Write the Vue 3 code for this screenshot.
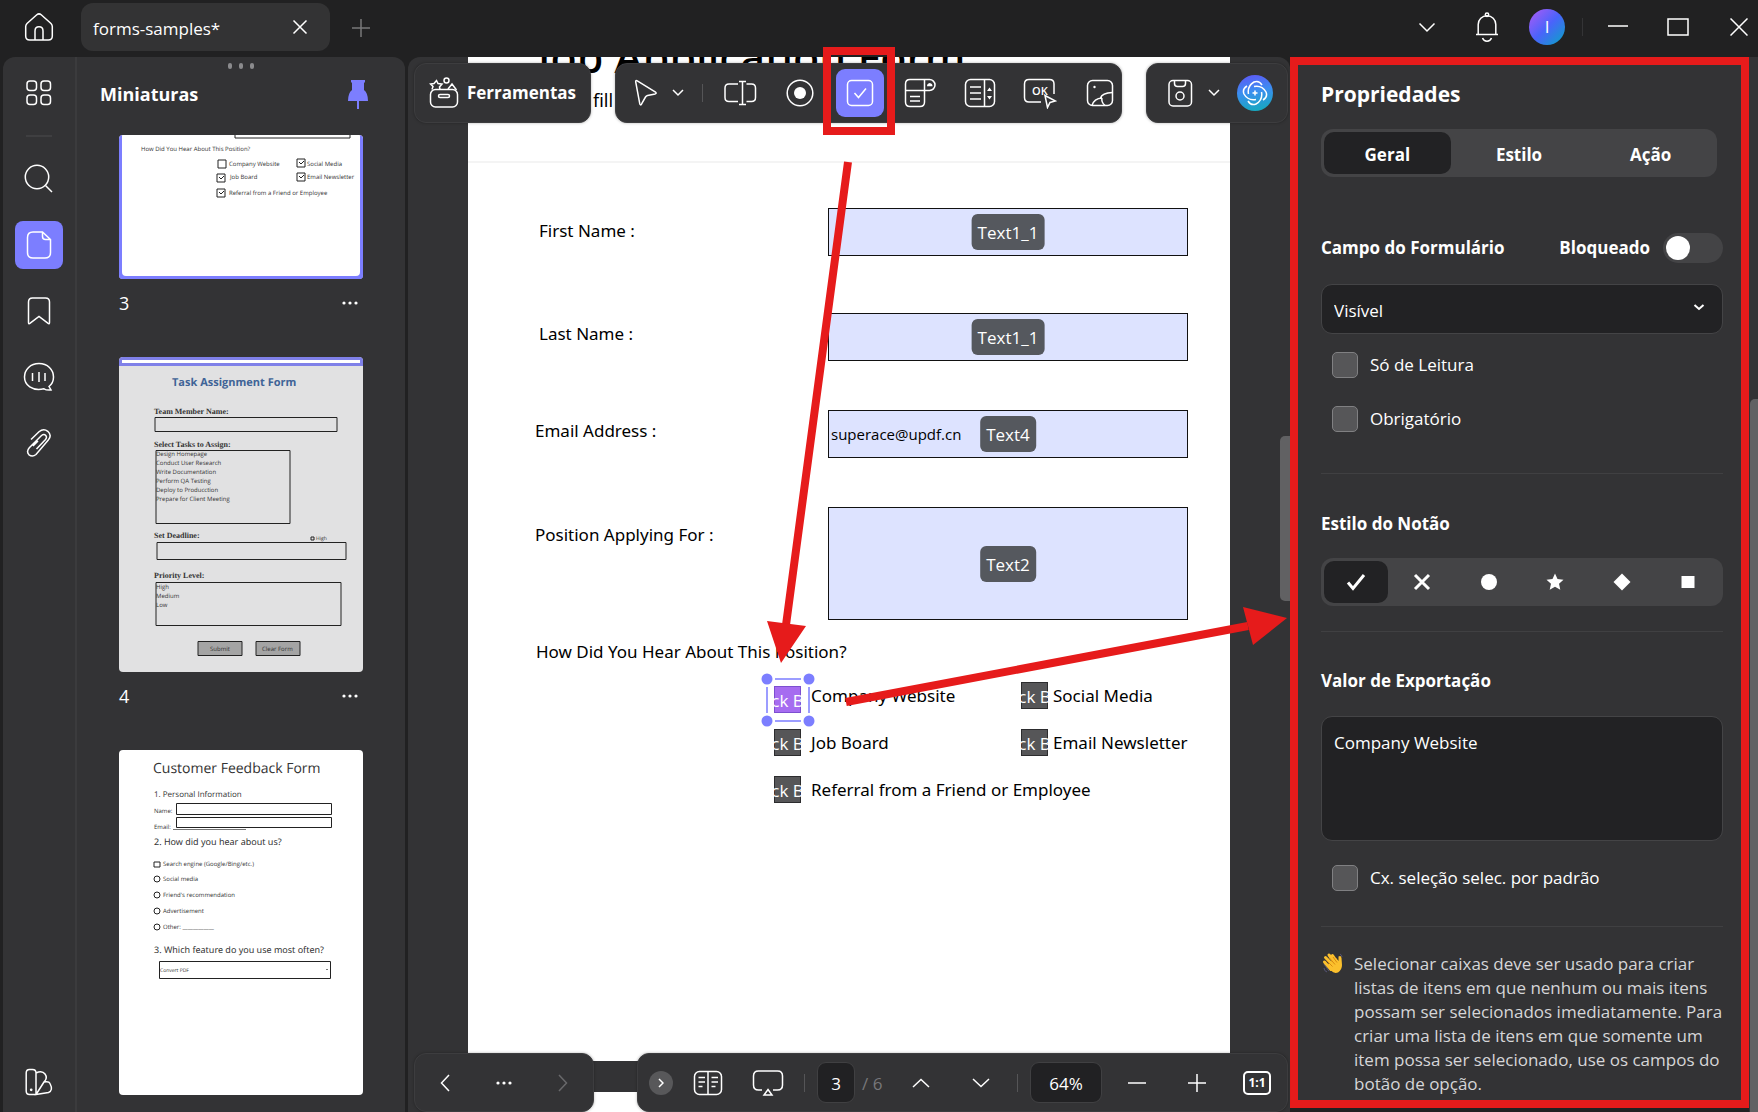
<script setup>
import { ref } from 'vue'

const tabs = ['Geral', 'Estilo', 'Ação']
const activeTab = ref('Geral')
const marks = ['check', 'cross', 'circle', 'star', 'diamond', 'square']
const activeMark = ref('check')
const visibility = ref('Visível')
const exportValue = ref('Company Website')
const email = ref('superace@updf.cn')
const zoom = ref('64%')
const pageNumber = ref('3')

const fields = [
  { id: 'first', label: 'First Name :', tag: 'Text1_1', kind: 'indent first' },
  { id: 'last', label: 'Last Name :', tag: 'Text1_1', kind: 'indent second' },
]
const choices = [
  { id: 'company', label: 'Company Website', selected: true },
  { id: 'social', label: 'Social Media', ticked: true },
  { id: 'job', label: 'Job Board', ticked: true },
  { id: 'news', label: 'Email Newsletter', ticked: true },
  { id: 'referral', label: 'Referral from a Friend or Employee', ticked: true, wide: true },
]
const tasks = [
  'Design Homepage',
  'Conduct User Research',
  'Write Documentation',
  'Perform QA Testing',
  'Deploy to Producction',
  'Prepare for Client Meeting',
]
const sources = ['Social media', "Friend's recommendation", 'Advertisement', 'Other: ____________']
</script>

<template>
  <div class="app">
    <header class="titlebar">
      <button class="home" aria-label="Home">
        <svg width="30" height="30" viewBox="0 0 30 30"><path d="M3 11.5 12.8 2.8q2.2-1.9 4.4 0L27 11.5q1.3 1.3 1.3 3V24q0 4-4 4H5.700q-4 0-4-4v-9.500q0-1.700 1.300-3zM11 28v-9q0-4.200 4-4.200t4 4.200v9" /></svg>
      </button>
      <div class="tab">
        <span>forms-samples*</span>
        <button aria-label="Close tab"><svg width="16" height="16" viewBox="0 0 16 16"><path d="M1.500 1.500l13 13m0-13l-13 13" /></svg></button>
      </div>
      <button class="newtab" aria-label="New tab"><svg width="18" height="18" viewBox="0 0 18 18"><path d="M9 0v18M0 9h18" /></svg></button>
      <div class="window">
        <button aria-label="More"><svg width="18" height="18" viewBox="0 0 18 18"><path d="M1.500 5.500 9 13l7.500-7.500" /></svg></button>
        <button aria-label="Notifications">
          <svg width="24" height="30" viewBox="0 0 24 30"><path d="M1 22.500h22M3.200 22.500V12.500a8.800 8.800 0 0 1 17.600 0v10M7.500 26a4.800 4.800 0 0 0 9 0" /><circle cx="12" cy="2.800" r="1.700" /></svg>
        </button>
        <button aria-label="Account"><span class="avatar">I</span></button>
        <i></i>
        <button aria-label="Minimize"><svg width="22" height="20" viewBox="0 0 22 20"><path d="M1 9h20" /></svg></button>
        <button aria-label="Maximize"><svg width="22" height="20" viewBox="0 0 22 20"><path d="M1 2h20v16H1z" /></svg></button>
        <button class="last" aria-label="Close"><svg width="18" height="18" viewBox="0 0 18 18"><path d="M.5.5l17 17m0-17l-17 17" /></svg></button>
      </div>
    </header>

    <main class="body">
      <section class="left">
        <nav class="rail">
          <button aria-label="Overview">
            <svg width="26" height="26" viewBox="0 0 26 26"><rect x="1" y="1" width="9.500" height="9.500" rx="3" /><rect x="15" y="1" width="9.500" height="9.500" rx="3" /><rect x="1" y="15" width="9.500" height="9.500" rx="3" /><rect x="15" y="15" width="9.500" height="9.500" rx="3" /></svg>
          </button>
          <hr />
          <button aria-label="Search"><svg width="30" height="30" viewBox="0 0 30 30"><circle cx="13" cy="13" r="11.700" /><path d="M21.500 21.500l6.500 6.500" /></svg></button>
          <button class="on" aria-label="Thumbnails">
            <svg width="26" height="30" viewBox="0 0 26 30"><path d="M16.500 2H7Q1.500 2 1.500 7.500v15Q1.500 28 7 28h12q5.500 0 5.500-5.500V9.500zM16.500 2v4.500q0 3 3 3h5" /></svg>
          </button>
          <button aria-label="Bookmarks"><svg width="24" height="30" viewBox="0 0 24 30"><path d="M1.500 6Q1.500 2 5.500 2h13q4 0 4 4v20.500q0 2.200-1.700.7L12 20.500l-8.800 6.700q-1.700 1.500-1.700-.7z" /></svg></button>
          <button aria-label="Comments">
            <svg width="32" height="30" viewBox="0 0 32 30"><path d="M26 24.500l2 3.500q-4.500.5-7-1.200C9 29.500 1.500 23 1.500 15 1.500 7.500 7.500 1.500 16 1.500S30.500 7.500 30.500 15q0 6-4.500 9.500zM9.500 11v8M16 10v10M22 11v8" /></svg>
          </button>
          <button aria-label="Attachments">
            <svg width="26" height="30" viewBox="0 0 26 30"><path d="M5 11.500l8-7.700q4.500-4 8.800-.5 4.500 4.200.5 8.700L10 26.500q-3.500 3-7 .3-3-3.300.3-7L15.500 7.500q2.500-1.800 4.300 0 1.500 2-.3 4L10.500 21M7 18l5-5" /></svg>
          </button>
          <button class="bottom" aria-label="Theme">
            <svg width="28" height="28" viewBox="0 0 28 28"><path d="M4.500 1.500h3q3.500 0 3.500 3.500V26.500H4.500q-3.300 0-3.300-3.500V5q0-3.500 3.300-3.500zM11 5q6-3 9 1t-1 8l-8 12.500M19 14q5-1 6 1.500 3.500 7-1.500 9l-12.500 2L19 14" /><circle cx="6.200" cy="21.800" r=".6" /></svg>
          </button>
        </nav>
        <div class="thumbs">
          <div class="grip"><i></i><i></i><i></i></div>
          <header>
            <h2>Miniaturas</h2>
            <button aria-label="Pin panel"><svg width="22" height="30" viewBox="0 0 22 30"><path class="solid" d="M4 0h14v2l-1 1v7q4 3 4 11h-9v8h-2v-8H1q0-8 4-11V3L4 2z" /></svg></button>
          </header>
          <div class="list">
            <figure>
              <svg class="thumb current" viewBox="0 0 244 144" role="img" aria-label="Page 3">
                <path class="ink" d="M116 0v3h115V0" />
                <g class="tiny">
                  <text x="22" y="16">How Did You Hear About This Position?</text>
                  <text x="110" y="31">Company Website</text><text x="188" y="31">Social Media</text>
                  <text x="111" y="44">Job Board</text><text x="188" y="44">Email Newsletter</text>
                  <text x="110" y="60">Referral from a Friend or Employee</text>
                </g>
                <path class="ink" d="M99 25h8v8h-8zM98 39h8v8h-8zM98 54h8v8h-8zM178 24h8v8h-8zM178 38h8v8h-8zM100 42l2 2 3-3M100 57l2 2 3-3M180 27l2 2 3-3M180 41l2 2 3-3" />
              </svg>
              <figcaption>3<button aria-label="Page 3 options"><svg width="16" height="4" viewBox="0 0 16 4"><g class="solid"><circle cx="2" cy="2" r="1.600" /><circle cx="8" cy="2" r="1.600" /><circle cx="14" cy="2" r="1.600" /></g></svg></button></figcaption>
            </figure>
            <figure>
              <svg class="thumb grey" viewBox="0 0 244 315" role="img" aria-label="Page 4">
                <path d="M0 0h244v9H0z" fill="#7f80e8" /><path d="M3 3h238v3H3z" fill="#fff" />
                <text class="task" x="53" y="29">Task Assignment Form</text>
                <g class="serif">
                  <text x="35" y="57">Team Member Name:</text><text x="35" y="90">Select Tasks to Assign:</text>
                  <text x="35" y="181">Set Deadline:</text><text x="35" y="221">Priority Level:</text>
                </g>
                <path class="ink" d="M36 60.500h182v14H36zM37 93.500h134v73H37zM38 185.500h189v17H38zM37 225.500h185v43H37zM192 180h3v3h-3z" />
                <g class="tiny">
                  <text v-for="(t, i) in tasks" :key="t" x="37" :y="99 + i * 9">{{ t }}</text>
                  <text v-for="(t, i) in ['High', 'Medium', 'Low']" :key="t" x="37" :y="232 + i * 9">{{ t }}</text>
                </g>
                <text class="micro" x="197" y="183">High</text>
                <path class="ink filled" d="M79 284.500h44v14H79zM137 284.500h44v14h-44z" />
                <g class="tiny"><text x="91" y="294">Submit</text><text x="143" y="294">Clear Form</text></g>
              </svg>
              <figcaption>4<button aria-label="Page 4 options"><svg width="16" height="4" viewBox="0 0 16 4"><g class="solid"><circle cx="2" cy="2" r="1.600" /><circle cx="8" cy="2" r="1.600" /><circle cx="14" cy="2" r="1.600" /></g></svg></button></figcaption>
            </figure>
            <figure>
              <svg class="thumb" viewBox="0 0 244 345" role="img" aria-label="Page 5">
                <text class="big" x="34" y="23">Customer Feedback Form</text>
                <text class="mid" x="35" y="47">1. Personal Information</text>
                <g class="tiny"><text x="35" y="63">Name:</text><text x="35" y="79">Email:</text></g>
                <path class="ink" d="M57.500 53.500h155v11h-155zM57.500 67.500h155v10h-155z" /><path class="hair" d="M54 79.500h73" />
                <text class="sub" x="35" y="95">2. How did you hear about us?</text>
                <text class="tiny" x="44" y="116">Search engine (Google/Bing/etc.)</text>
                <path class="ink" d="M35 112h6v5h-6z" />
                <g v-for="(t, i) in sources" :key="t">
                  <circle class="ink" cx="38" :cy="129 + i * 16" r="3" />
                  <text class="tiny" x="44" :y="131 + i * 16">{{ t }}</text>
                </g>
                <text class="sub" x="35" y="203">3. Which feature do you use most often?</text>
                <path class="ink" d="M40.500 211.500h171v17h-171z" />
                <text class="micro" x="41" y="222">Convert PDF</text><path class="hair" d="M207 219l1 1 1-1" />
              </svg>
            </figure>
          </div>
        </div>
      </section>

      <section class="center">
        <div class="viewport">
          <article class="sheet">
            <div class="heading">
              <h1>Job Application Form</h1>
              <p>fill</p>
            </div>
            <form @submit.prevent>
              <div v-for="f in fields" :key="f.id" class="row" :class="f.kind">
                <label :for="f.id">{{ f.label }}</label>
                <div class="field"><input :id="f.id" type="text" /><span>{{ f.tag }}</span></div>
              </div>
              <div class="row">
                <label for="email">Email Address :</label>
                <div class="field"><input id="email" v-model="email" type="text" /><span>Text4</span></div>
              </div>
              <div class="row tall">
                <label for="position">Position Applying For :</label>
                <div class="field"><textarea id="position"></textarea><span>Text2</span></div>
              </div>
              <fieldset>
                <legend>How Did You Hear About This Position?</legend>
                <div class="choices">
                  <label v-for="c in choices" :key="c.id" :class="{ wide: c.wide, selected: c.selected }">
                    <span class="box">
                      <input type="checkbox" :checked="c.ticked" />
                      <b>ck B</b>
                      <svg v-if="c.selected" class="handles" width="54" height="54" viewBox="0 0 54 54">
                        <path d="M14 6h26M14 48h26M6 14v26M48 14v26" />
                        <circle cx="6" cy="6" r="5.500" /><circle cx="48" cy="6" r="5.500" /><circle cx="6" cy="48" r="5.500" /><circle cx="48" cy="48" r="5.500" />
                      </svg>
                    </span>
                    {{ c.label }}
                  </label>
                </div>
              </fieldset>
            </form>
          </article>
          <article class="next"></article>
          <div class="scroll"></div>
        </div>

        <div class="bar top">
          <button class="box-bar tools">
            <svg width="30" height="32" viewBox="0 0 30 32"><rect x="1.500" y="12.500" width="27" height="17.500" rx="5" /><rect x="9.500" y="17.500" width="11" height="3" rx="1.500" /><path d="M3 12.500l1-3-2.500-2.500 3.500-.5 2.500-3 1.500 3 4 .5-2.500 3 .5 2.500M19 12l4-5 4.500 6" /><circle cx="17.500" cy="3.500" r="2.500" /></svg>
            Ferramentas
          </button>
          <div class="box-bar kit">
            <button class="pick" aria-label="Select"><svg width="24" height="28" viewBox="0 0 24 28"><path d="M1.700 2.800q-.2-2 1.600-1L21.500 13q1.500 1.300-.3 1.900l-7.700 1.600q-1.300.3-2 1.500l-4 7.200q-1.200 1.500-1.700-.3z" /></svg></button>
            <button class="drop" aria-label="Select options"><svg width="12" height="8" viewBox="0 0 12 8"><path d="M1 1l5 5 5-5" /></svg></button>
            <i></i>
            <div class="seven">
              <button aria-label="Text field"><svg width="34" height="26" viewBox="0 0 34 26"><path d="M15 4H6Q2 4 2 8v9.500q0 4 4 4h9M23.500 4h5q4 0 4 4v9.500q0 4-4 4h-5M19.500 1.500v23M16 1.500h7M16 24.500h7" /></svg></button>
              <button aria-label="Radio button"><svg width="28" height="28" viewBox="0 0 28 28"><circle cx="14" cy="14" r="12.800" /><circle class="solid" cx="14" cy="14" r="6" /></svg></button>
              <button class="on" aria-label="Check box"><svg width="28" height="28" viewBox="0 0 28 28"><rect x="1.500" y="1.500" width="25" height="25" rx="4" /><path d="M8.500 14l4 4.500 7.500-9" /></svg></button>
              <button aria-label="Dropdown"><svg width="32" height="30" viewBox="0 0 32 30"><path d="M20.500 12.500V24q0 4.500-4.500 4.500H6Q1.500 28.500 1.500 24V6Q1.500 1.500 6 1.500h19.500a5.500 5.500 0 0 1 0 11zM20.500 1.500v11M1.500 12.500h19M6 18.500h10M6 23h10" /><path class="solid" d="M23 8.200q0-2.700 2.700-3.200 2.800.5 2.800 3.200z" /></svg></button>
              <button aria-label="List box"><svg width="32" height="30" viewBox="0 0 32 30"><rect x="1.500" y="1.500" width="29" height="27" rx="5" /><path d="M20.500 1.500v27M6 9h11M6 15h11M6 21h11" /><path class="solid" d="M23 13l2.500-3.500L28 13zM23 18l2.500 3.500L28 18z" /></svg></button>
              <button aria-label="Button">
                <svg width="34" height="32" viewBox="0 0 34 32"><path d="M18 25H6Q1.500 25 1.500 20.500V7Q1.500 2.500 6 2.500h20.500Q31 2.500 31 7v10" /><path d="M22 18.500l2.500 12 2.500-5 5.500-1.500z" /><text x="9" y="18">OK</text></svg>
              </button>
              <button aria-label="Image"><svg width="28" height="28" viewBox="0 0 28 28"><rect x="1.500" y="1.500" width="25" height="25" rx="5" /><path d="M6 26.500q2-7 10-7.500M10.500 26.500M14.500 19q1.500-5 12-5.500M16 19q-1 4 3 7.500" /><circle class="solid" cx="8.500" cy="8" r="1.200" /></svg></button>
            </div>
          </div>
          <div class="box-bar extra">
            <button aria-label="Save"><svg width="26" height="28" viewBox="0 0 26 28"><rect x="2" y="1.500" width="22.500" height="25.500" rx="4" /><path d="M7.500 1.500v3q0 3 3 3h5q3 0 3-3v-3" /><circle cx="13" cy="17" r="4" /></svg></button>
            <button class="drop" aria-label="Save options"><svg width="12" height="8" viewBox="0 0 12 8"><path d="M1 1l5 5 5-5" /></svg></button>
            <button class="ai" aria-label="AI assistant">
              <svg width="26" height="26" viewBox="0 0 26 26"><path d="M6.500 14Q5 6 12 2q5-2 8 3M12 6.500q8-1.500 12 5.500 2 5-3 8M19.500 12q1.500 8-5.500 12-5 2-8-3M14 19.500Q6 21 2 14 0 9 5 6M13 10.500v5M10.500 13h5" /></svg>
            </button>
          </div>
        </div>

        <div class="bar foot">
          <div class="box-bar history">
            <button aria-label="Back"><svg width="10" height="18" viewBox="0 0 10 18"><path d="M9 1L1.500 9 9 17" /></svg></button>
            <button aria-label="More"><svg width="16" height="4" viewBox="0 0 16 4"><g class="solid"><circle cx="2" cy="2" r="1.600" /><circle cx="8" cy="2" r="1.600" /><circle cx="14" cy="2" r="1.600" /></g></svg></button>
            <button class="dim" aria-label="Forward"><svg width="10" height="18" viewBox="0 0 10 18"><path d="M1 1l7.500 8L1 17" /></svg></button>
          </div>
          <div class="box-bar pager">
            <button class="round" aria-label="Collapse"><svg width="6" height="10" viewBox="0 0 6 10"><path d="M1 1l4 4-4 4" /></svg></button>
            <button class="book" aria-label="Page layout"><svg width="30" height="26" viewBox="0 0 30 26"><rect x="1.500" y="1.500" width="27" height="23" rx="5" /><path d="M15 1.500v23M5.500 7.500H12M5.500 12H12M5.500 16.500h4M18.500 7.500H25M18.500 12H25M18.500 16.500h4" /></svg></button>
            <button aria-label="Presentation"><svg width="32" height="28" viewBox="0 0 32 28"><path d="M10 21H6.500Q1.500 21 1.500 16V7Q1.500 2 6.500 2h19q5 0 5 5v9q0 5-5 5H21M16 20.500l4 5.500h-8z" /></svg></button>
            <i></i>
            <input v-model="pageNumber" class="pill page" aria-label="Page" />
            <span class="total">/ 6</span>
            <button aria-label="Previous page"><svg width="18" height="10" viewBox="0 0 18 10"><path d="M1 9l8-7.500L17 9" /></svg></button>
            <button aria-label="Next page"><svg width="18" height="10" viewBox="0 0 18 10"><path d="M1 1l8 7.500L17 1" /></svg></button>
            <i></i>
            <input v-model="zoom" class="pill zoom" aria-label="Zoom" />
            <button aria-label="Zoom out"><svg width="18" height="18" viewBox="0 0 18 18"><path d="M0 9h18" /></svg></button>
            <button aria-label="Zoom in"><svg width="18" height="18" viewBox="0 0 18 18"><path d="M9 0v18M0 9h18" /></svg></button>
            <button aria-label="Actual size"><span class="ratio">1:1</span></button>
          </div>
        </div>

        <svg class="arrows" width="882" height="700" viewBox="0 0 882 700">
          <path class="stem" d="M440 105L378 568M438 645L840 569" />
          <path class="tip" d="M359 564l39 5-25 37zM835 550l44 11-34 27z" />
        </svg>
      </section>

      <aside class="props">
        <h2>Propriedades</h2>
        <div class="segment tabs">
          <button v-for="t in tabs" :key="t" :class="{ on: t === activeTab }" @click="activeTab = t">{{ t }}</button>
        </div>
        <div class="head">
          <label for="visibility">Campo do Formulário</label>
          <label class="lock">Bloqueado <input type="checkbox" role="switch" /></label>
        </div>
        <div class="select">
          <select id="visibility" v-model="visibility"><option>Visível</option></select>
          <svg width="12" height="8" viewBox="0 0 12 8"><path d="M1.500 1L6 5l4.500-4" /></svg>
        </div>
        <label class="tick"><input type="checkbox" />Só de Leitura</label>
        <label class="tick again"><input type="checkbox" />Obrigatório</label>
        <hr class="after-ticks" />
        <h3>Estilo do Notão</h3>
        <div class="segment marks">
          <button v-for="m in marks" :key="m" :class="{ on: m === activeMark }" :aria-label="m" @click="activeMark = m">
            <svg width="20" height="18" viewBox="0 0 20 18">
              <path v-if="m === 'check'" class="thick" d="M2 9.500l5 6L18 2" />
              <path v-else-if="m === 'cross'" class="thick" d="M3 2l14 14M17 2L3 16" />
              <circle v-else-if="m === 'circle'" class="solid" cx="10" cy="9" r="8" />
              <path v-else-if="m === 'star'" class="solid" d="M10 .5l2.500 5.600 6 .6-4.500 4.100 1.300 6L10 13.800l-5.300 3 1.300-6L1.500 6.700l6-.6z" />
              <path v-else-if="m === 'diamond'" class="solid" d="M10 .5L18.500 9 10 17.500 1.500 9z" />
              <path v-else class="solid" d="M3.500 3h13v12h-13z" />
            </svg>
          </button>
        </div>
        <hr class="after-marks" />
        <h3><label for="export">Valor de Exportação</label></h3>
        <textarea id="export" v-model="exportValue"></textarea>
        <label class="tick"><input type="checkbox" />Cx. seleção selec. por padrão</label>
        <hr class="after-export" />
        <div class="note">
          <svg width="22" height="22" viewBox="0 0 22 22">
            <path d="M7 19L2 12M18 2q2 1 2 3M2 16q0 3 3 4" stroke="#557" stroke-width="1" />
            <path d="M9 17.500L2.500 10M11 13L3.500 5.500M13 11L7 3M15 10l-4.500-6.500" stroke="#fbc02d" stroke-width="3" stroke-linecap="round" />
            <path d="M6 12l8-6 2.500 3V4.500Q19 3 19.500 6l.5 7q0 5-4 7.500-4 1.500-7-2z" fill="#fbc02d" stroke="none" />
            <path d="M4.500 8.500l6 6M7.500 6l5.500 6.500M11 5l4 5.500" stroke="#d98a10" stroke-width="1" />
          </svg>
          <p>Selecionar caixas deve ser usado para criar listas de itens em que nenhum ou mais itens possam ser selecionados imediatamente. Para criar uma lista de itens em que somente um item possa ser selecionado, use os campos do botão de opção.</p>
        </div>
      </aside>
      <div class="gutter"><div></div></div>
    </main>
  </div>
</template>

<style>
body {
  margin: 0;
  background: #212122;
}
</style>

<style scoped>
* {
  box-sizing: border-box;
}
.app {
  height: 100vh;
  display: flex;
  flex-direction: column;
  overflow: hidden;
  background: #212122;
  color: #fff;
  font-family: "Open Sans", "Noto Sans", sans-serif;
  font-size: 17px;
  line-height: 24px;
}
h1, h2, h3, p, figure, fieldset, hr {
  margin: 0;
  padding: 0;
  border: 0;
}
button {
  display: flex;
  align-items: center;
  justify-content: center;
  padding: 0;
  border: 0;
  background: none;
  color: inherit;
  font: inherit;
}
input, textarea, select {
  margin: 0;
  color: inherit;
  font: inherit;
}
svg {
  display: block;
  flex: none;
  fill: none;
  stroke: currentColor;
  stroke-width: 1.500;
}
.solid {
  fill: currentColor;
  stroke: none;
}

.titlebar {
  display: flex;
  height: 57px;
  flex: none;
  align-items: flex-start;
}
.home {
  width: 78px;
  height: 54px;
  margin-right: 3px;
}
.tab {
  display: flex;
  align-items: center;
  justify-content: space-between;
  width: 249px;
  height: 48px;
  margin-top: 3px;
  padding: 0 22px 0 12px;
  border-radius: 12px;
  background: #333334;
}
.tab span {
  padding-top: 3px;
}
.newtab {
  width: 62px;
  height: 56px;
  color: #78787a;
}
.window {
  display: flex;
  height: 54px;
  margin-left: auto;
}
.window button {
  width: 60px;
}
.window i {
  width: 1px;
  height: 18px;
  margin: 18px 5px;
  background: #343436;
}
.window .last {
  width: 50px;
  padding-left: 12px;
}
.avatar {
  width: 36px;
  height: 36px;
  border-radius: 50%;
  line-height: 36px;
  background: linear-gradient(135deg, #9c5cf6 10%, #4a63fb 50%, #0da0c8 95%);
}

.body {
  display: flex;
  flex: 1;
  min-height: 0;
}
.left {
  display: flex;
  width: 402px;
  flex: none;
  margin: 0 3px;
  border-radius: 12px 12px 0 0;
  background: #333335;
}
.rail {
  display: flex;
  flex-direction: column;
  align-items: center;
  gap: 18px;
  width: 74px;
  padding: 12px 0 6px;
  border-right: 2px solid #3b3b3d;
}
.rail button {
  width: 48px;
  height: 48px;
  border-radius: 8px;
}
.rail hr {
  width: 26px;
  height: 2px;
  background: #3f3f41;
}
.rail .on,
.seven .on {
  background: #7c7eff;
}
.rail .bottom {
  margin-top: auto;
}
.thumbs {
  display: flex;
  flex: 1;
  flex-direction: column;
  min-width: 0;
}
.grip {
  display: flex;
  justify-content: center;
  gap: 7px;
  padding: 6px 0;
}
.grip i {
  width: 4px;
  height: 6px;
  border-radius: 2px;
  background: #8b8b8d;
}
.thumbs header {
  display: flex;
  align-items: flex-start;
  justify-content: space-between;
  height: 60px;
  padding: 5px 36px 0 23px;
}
.thumbs header button {
  color: #7c7eff;
}
h2 {
  font-size: 18px;
  line-height: 28px;
}
.list {
  flex: 1;
  min-height: 0;
  padding: 0 42px;
  overflow: hidden;
}
.thumb {
  width: 100%;
  height: auto;
  border-radius: 4px;
  background: #fff;
  stroke: none;
  text-rendering: geometricPrecision;
}
.thumb.grey {
  background: #e1e1e2;
}
.thumb.current {
  box-shadow: inset 3px -3px #7c7eff, inset -3px -3px #7c7eff;
}
.thumb text {
  fill: #333;
}
.tiny {
  font-size: 6px;
}
.micro {
  font-size: 5px;
}
.mid {
  font-size: 8px;
}
.sub {
  font-family: "Noto Sans", sans-serif;
  font-size: 9px;
}
.big {
  font-size: 14px;
}
.serif {
  font-family: "Liberation Serif", serif;
  font-size: 8px;
  font-weight: 700;
}
.thumb .task {
  fill: #3f6497;
  font-size: 11px;
  font-weight: 700;
}
.ink {
  fill: none;
  stroke: #222;
  stroke-width: 1;
}
.ink.filled {
  fill: #a4a4a4;
}
.hair {
  stroke: #777;
  stroke-width: 1;
}
figcaption {
  display: flex;
  align-items: flex-start;
  justify-content: space-between;
  height: 78px;
  padding: 12px 5px 0 0;
  font-size: 18px;
}
figcaption button {
  height: 24px;
}

.center {
  position: relative;
  flex: 1;
  min-width: 0;
}
.viewport {
  position: relative;
  display: flex;
  flex-direction: column;
  gap: 31px;
  height: 100%;
  padding: 0 60px;
  overflow: hidden;
  border-radius: 12px 12px 0 0;
  background: #333335;
  color: #000;
}
.sheet {
  font-family: "Noto Sans", sans-serif;
}
.sheet,
.next {
  flex: none;
  height: 1004px;
  background: #fff;
}
.heading {
  height: 106px;
  padding: 0 70px;
  overflow: hidden;
  border-bottom: 2px solid #f4f4f4;
}
h1 {
  height: 29px;
  font-size: 43px;
  font-weight: 500;
  line-height: 0;
  white-space: nowrap;
}
.heading p {
  padding-left: 55px;
  font-size: 18px;
  line-height: 28px;
}
.row {
  display: grid;
  grid-template-columns: 1fr 360px;
  height: 48px;
  margin: 49px 42px 0 67px;
  line-height: 24px;
}
.row.indent {
  margin-left: 71px;
}
.row.first {
  margin-top: 45px;
}
.row.second {
  margin-top: 57px;
}
.row.tall {
  height: 113px;
}
.row label {
  padding-top: 9px;
}
.row.first label {
  padding-top: 11px;
}
.row.tall label {
  padding-top: 16px;
}
.field {
  position: relative;
  font-family: "Open Sans", sans-serif;
}
.field input,
.field textarea {
  display: block;
  width: 100%;
  height: 100%;
  padding: 0 2px;
  border: 1px solid #111;
  border-radius: 0;
  outline: 0;
  background: #dde3ff;
  font-size: 15px;
  resize: none;
}
.field span {
  position: absolute;
  top: 50%;
  left: 50%;
  height: 36px;
  padding: 0 6px;
  border-radius: 6px;
  background: #55585e;
  color: #fff;
  line-height: 38px;
  transform: translate(-50%, -50%);
}
fieldset {
  margin: 20px 0 0 68px;
}
legend {
  padding: 0;
}
.choices {
  display: grid;
  grid-template-columns: 247px auto;
  justify-content: start;
  row-gap: 20px;
  padding: 18px 0 0 238px;
}
.choices label {
  display: flex;
  gap: 10px;
  height: 27px;
  line-height: 27px;
  white-space: nowrap;
}
.choices label:nth-child(even) {
  gap: 5px;
}
.choices .wide {
  grid-column: span 2;
}
.box {
  position: relative;
  width: 27px;
  height: 27px;
  flex: none;
  font-family: "Open Sans", sans-serif;
}
.box input {
  position: absolute;
  inset: 0;
  width: 27px;
  height: 27px;
  appearance: none;
  border: 1px solid #2c2c2e;
  background: #565658;
}
.box b {
  position: relative;
  display: flex;
  justify-content: center;
  overflow: hidden;
  color: #fff;
  font-weight: 400;
  line-height: 30px;
}
.selected .box {
  margin-top: 4px;
}
.selected .box input {
  border-color: #7c4fd0;
  background: #a66cf0;
}
.handles {
  position: absolute;
  top: -13px;
  left: -13px;
  stroke: #7c7eff;
}
.handles circle {
  fill: #7c7eff;
  stroke: none;
}
.scroll {
  position: absolute;
  top: 379px;
  right: 0;
  width: 10px;
  height: 165px;
  border-radius: 5px 0 0 5px;
  background: #616163;
}

.bar {
  position: absolute;
  right: 2px;
  left: 6px;
  display: flex;
  justify-content: space-between;
}
.bar.top {
  top: 6px;
}
.bar.foot {
  bottom: 0;
}
.box-bar {
  display: flex;
  align-items: center;
  height: 60px;
  border: 1px solid #3d3d3f;
  border-radius: 12px;
  background: #333335;
  box-shadow: 0 0 3px rgba(0, 0, 0, 0.3);
}
.foot .box-bar {
  height: 59px;
}
.tools {
  gap: 8px;
  width: 177px;
  font-weight: 700;
}
.kit {
  width: 507px;
}
.kit .pick {
  width: 51px;
  padding-left: 10px;
}
.drop {
  width: 24px;
  height: 24px;
}
.kit i {
  width: 1px;
  height: 18px;
  margin: 0 16px 0 12px;
  background: #555557;
}
.seven {
  display: flex;
  gap: 18px;
}
.seven button {
  position: relative;
  width: 42px;
  height: 42px;
  border-radius: 6px;
}
.seven .on {
  box-shadow: 0 0 0 3px #7c7eff;
}
.seven .on::after {
  position: absolute;
  inset: -25px -14px -21px -16px;
  border: 8px solid #e61b1b;
  content: "";
}
.seven text {
  fill: currentColor;
  stroke: none;
  font-size: 11px;
  font-weight: 600;
}
.extra {
  width: 142px;
  padding-left: 20px;
  gap: 9px;
}
.ai {
  width: 36px;
  height: 36px;
  margin-left: 2px;
  border-radius: 50%;
  background: linear-gradient(170deg, #5c5bf6 5%, #3b8ef0 45%, #15a9bd 95%);
}
.history {
  width: 180px;
}
.history button {
  flex: 1;
  height: 57px;
}
.dim {
  color: #69696b;
}
.pager {
  width: 651px;
  padding-left: 11px;
}
.pager button {
  width: 60px;
  height: 57px;
}
.pager .round {
  width: 24px;
  height: 24px;
  border-radius: 50%;
  background: #58585a;
}
.pager .book {
  margin-left: 5px;
}
.pager i {
  width: 1px;
  height: 18px;
  margin: 0 12px 0 6px;
  background: #555557;
}
.pill {
  height: 41px;
  padding: 2px 0 0;
  border: 1px solid #404042;
  border-radius: 9px;
  background: #212123;
  text-align: center;
}
.page {
  width: 38px;
}
.zoom {
  width: 72px;
  margin-right: 5px;
}
.total {
  width: 36px;
  padding: 2px 0 0 7px;
  color: #77777a;
}
.ratio {
  width: 28px;
  height: 24px;
  border: 2px solid #fff;
  border-radius: 5px;
  font-size: 12px;
  font-weight: 700;
  line-height: 20px;
}
.arrows {
  position: absolute;
  top: 0;
  left: 0;
  pointer-events: none;
}
.stem {
  stroke: #e61b1b;
  stroke-width: 8;
}
.tip {
  fill: #e61b1b;
  stroke: none;
}

.props {
  width: 459px;
  flex: none;
  margin-bottom: 4px;
  padding: 15px 18px 0 23px;
  border: 8px solid #e61b1b;
  overflow: hidden;
  background: #333335;
}
.props h2 {
  font-size: 21px;
}
.segment {
  display: flex;
  height: 48px;
  padding: 3px;
  border-radius: 12px;
  background: #444446;
}
.segment button {
  flex: 1;
  border-radius: 10px;
}
.segment .on {
  background: #222224;
}
.tabs {
  gap: 5px;
  margin: 21px 6px 0 0;
  font-weight: 700;
}
.tabs button {
  padding-top: 4px;
}
.head {
  display: flex;
  align-items: center;
  justify-content: space-between;
  height: 30px;
  margin: 56px 0 21px;
  font-weight: 700;
}
.lock {
  display: flex;
  align-items: center;
  gap: 13px;
}
.lock input {
  display: flex;
  width: 60px;
  height: 30px;
  padding: 3px;
  appearance: none;
  border-radius: 15px;
  background: #444446;
}
.lock input::before {
  width: 24px;
  height: 24px;
  border-radius: 50%;
  background: #fff;
  content: "";
}
.select {
  position: relative;
}
.select select {
  display: block;
  width: 100%;
  height: 50px;
  padding: 3px 12px 0;
  appearance: none;
  border: 1px solid #444446;
  border-radius: 11px;
  background: #222224;
}
.select svg {
  position: absolute;
  top: 20px;
  right: 18px;
  stroke-width: 2;
}
.tick {
  display: flex;
  align-items: center;
  gap: 12px;
  height: 26px;
  margin: 18px 0 0 11px;
}
.tick.again {
  margin-top: 28px;
}
.tick input {
  width: 26px;
  height: 26px;
  appearance: none;
  border: 1px solid #808082;
  border-radius: 5px;
  background: #565658;
}
.props hr {
  height: 1px;
  background: #404042;
}
.props .after-ticks {
  margin: 41px 0 38px;
}
h3 {
  height: 24px;
  font-size: 17px;
}
.marks {
  gap: 3px;
  margin-top: 22px;
}
.thick {
  stroke-width: 3;
}
.props .after-marks {
  margin: 25px 0 37px;
}
.props textarea {
  display: block;
  width: 100%;
  height: 125px;
  margin: 23px 0 24px;
  padding: 14px 12px;
  border: 1px solid #444446;
  border-radius: 11px;
  background: #222224;
  resize: none;
}
.props .after-export {
  margin: 35px 0 25px;
}
.note {
  display: flex;
  gap: 10px;
  margin-left: 1px;
  color: #d6d6d8;
}
.gutter {
  width: 9px;
  padding: 342px 0 0 1px;
  background: #333335;
}
.gutter div {
  height: 100%;
  border-radius: 5px 0 0;
  background: #616163;
}
</style>
